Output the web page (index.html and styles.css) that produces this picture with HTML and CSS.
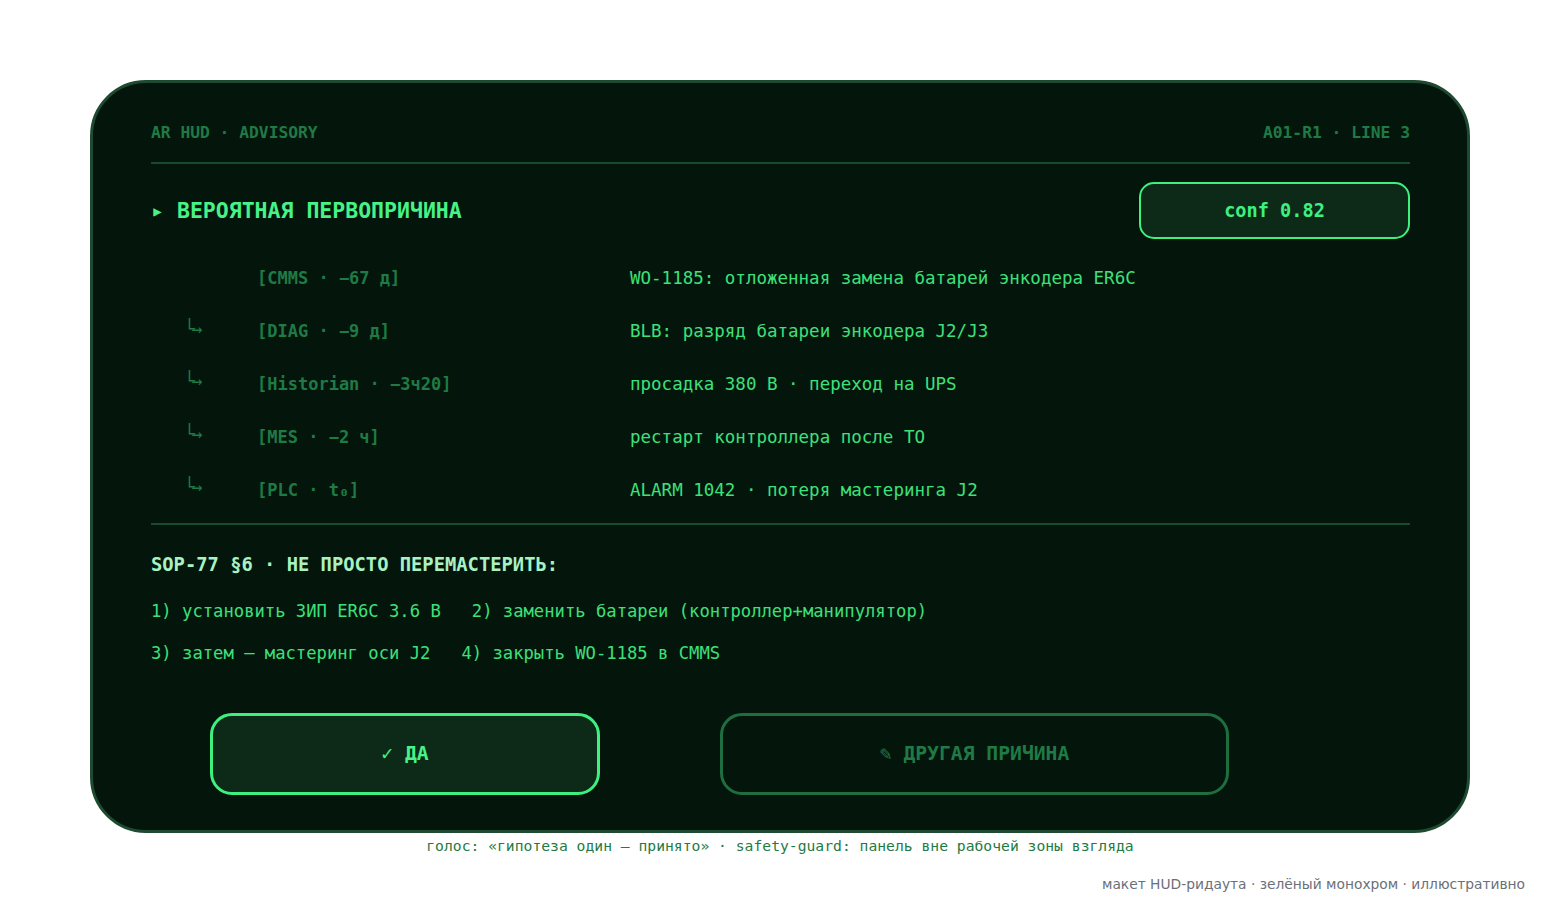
FILE: index.html
```html
<!DOCTYPE html>
<html lang="ru">
<head>
<meta charset="utf-8">
<title>AR HUD · ADVISORY</title>
<link rel="stylesheet" href="styles.css">
</head>
<body>
<div class="page">
  <div class="card">
    <div class="head">
      <span>AR HUD · ADVISORY</span>
      <span>A01-R1 · LINE 3</span>
    </div>
    <div class="title-row">
      <div class="title"><span class="tri">▸</span> ВЕРОЯТНАЯ ПЕРВОПРИЧИНА</div>
      <div class="conf">conf 0.82</div>
    </div>
    <div class="chain">
      <div class="row"><span class="arr"></span><span class="src">[CMMS · −67 д]</span><span class="txt">WO-1185: отложенная замена батарей энкодера ER6C</span></div>
      <div class="row"><span class="arr">└→</span><span class="src">[DIAG · −9 д]</span><span class="txt">BLB: разряд батареи энкодера J2/J3</span></div>
      <div class="row"><span class="arr">└→</span><span class="src">[Historian · −3ч20]</span><span class="txt">просадка 380 В · переход на UPS</span></div>
      <div class="row"><span class="arr">└→</span><span class="src">[MES · −2 ч]</span><span class="txt">рестарт контроллера после ТО</span></div>
      <div class="row"><span class="arr">└→</span><span class="src">[PLC · t₀]</span><span class="txt">ALARM 1042 · потеря мастеринга J2</span></div>
    </div>
    <div class="sop">
      <div class="sop-title">SOP-77 §6 · НЕ ПРОСТО ПЕРЕМАСТЕРИТЬ:</div>
      <div class="step first">1) установить ЗИП ER6C 3.6 В   2) заменить батареи (контроллер+манипулятор)</div>
      <div class="step">3) затем — мастеринг оси J2   4) закрыть WO-1185 в CMMS</div>
    </div>
    <div class="actions">
      <div class="btn yes">✓ ДА</div>
      <div class="btn other">✎ ДРУГАЯ ПРИЧИНА</div>
    </div>
  </div>
  <div class="voice">голос: «гипотеза один — принято» · safety-guard: панель вне рабочей зоны взгляда</div>
  <div class="caption">макет HUD-ридаута · зелёный монохром · иллюстративно</div>
</div>
</body>
</html>
```
FILE: styles.css
```css
* { box-sizing: border-box; }
html, body { margin: 0; padding: 0; background: #ffffff; }
body {
  font-family: "DejaVu Sans Mono", "Liberation Mono", monospace;
  width: 1560px;
  height: 923px;
  overflow: hidden;
}
.page {
  padding: 80px 0 0 90px;
  display: flex;
  flex-direction: column;
}
.card {
  width: 1380px;
  height: 753px;
  background: #04160c;
  border: 3px solid #1d4a30;
  border-radius: 56px;
  padding: 36px 57px 0 58px;
  display: flex;
  flex-direction: column;
}
.head {
  display: flex;
  justify-content: space-between;
  color: #1f7a45;
  font-weight: bold;
  font-size: 16.3px;
  height: 28px;
  line-height: 28px;
  border-bottom: 2px solid #1a4a2d;
  box-sizing: content-box;
  padding-bottom: 15px;
}
.title-row {
  display: flex;
  justify-content: space-between;
  align-items: center;
  margin-top: 18px;
}
.title {
  color: #47f286;
  font-weight: bold;
  font-size: 21.5px;
}
.tri { display: inline-block; width: 13px; }
.conf {
  width: 271px;
  height: 57px;
  border: 2.5px solid #3ef07f;
  border-radius: 15px;
  background: #0d2a19;
  color: #3ef07f;
  font-weight: bold;
  font-size: 18.6px;
  display: flex;
  align-items: center;
  justify-content: center;
}
.chain {
  display: flex;
  flex-direction: column;
  margin-top: 13px;
  padding-bottom: 7px;
  border-bottom: 2px solid #1a4a2d;
}
.row {
  display: flex;
  align-items: center;
  height: 52.8px;
}
.arr {
  width: 106px;
  padding-left: 33px;
  color: #1f7a45;
  font-size: 18px;
  letter-spacing: -3px;
  position: relative;
  top: -3px;
}
.src {
  width: 373px;
  color: #1f7a45;
  font-weight: bold;
  font-size: 17px;
}
.txt {
  color: #3ee07a;
  font-size: 17.5px;
}
.sop { margin-top: 26px; display: flex; flex-direction: column; }
.sop-title {
  color: #a8f2c2;
  font-weight: bold;
  font-size: 18.8px;
  height: 28px;
  line-height: 28px;
}
.step {
  color: #3ee07a;
  font-size: 17.2px;
  white-space: pre;
  height: 42px;
  line-height: 28px;
}
.step.first { margin-top: 18px; }
.actions {
  display: flex;
  margin-top: 32px;
  margin-left: 59px;
  gap: 120px;
}
.btn {
  height: 82px;
  border-radius: 22px;
  display: flex;
  align-items: center;
  justify-content: center;
  font-weight: bold;
  font-size: 19.7px;
}
.yes {
  width: 390px;
  border: 3px solid #3ef07f;
  background: #0d2a19;
  color: #47f286;
}
.other {
  width: 509px;
  border: 3px solid #1e6e3f;
  color: #1f7a45;
}
.voice {
  width: 1380px;
  text-align: center;
  color: #1f7a45;
  font-size: 14.7px;
  margin-top: 3px;
  height: 20px;
  line-height: 20px;
}
.caption {
  width: 1435px;
  text-align: right;
  font-family: "DejaVu Sans", sans-serif;
  color: #6b7078;
  font-size: 13.8px;
  margin-top: 20px;
}
```
